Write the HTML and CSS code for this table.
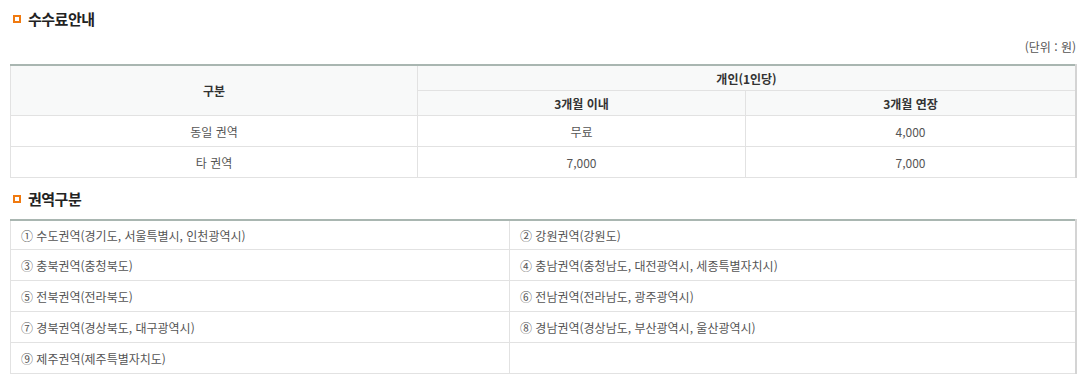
FILE: index.html
```html
<!DOCTYPE html>
<html lang="ko">
<head>
<meta charset="utf-8">
<link rel="stylesheet" href="styles.css">
</head>
<body>
<div class="page">
  <h3 class="title"><span class="bullet"></span>수수료안내</h3>
  <p class="unit">(단위 : 원)</p>
  <table class="tbl fee">
    <colgroup><col class="c1"><col class="c2"><col class="c3"></colgroup>
    <thead>
      <tr class="h1"><th rowspan="2">구분</th><th colspan="2">개인(1인당)</th></tr>
      <tr class="h2"><th>3개월 이내</th><th>3개월 연장</th></tr>
    </thead>
    <tbody>
      <tr class="r1"><td>동일 권역</td><td>무료</td><td>4,000</td></tr>
      <tr class="r2"><td>타 권역</td><td>7,000</td><td>7,000</td></tr>
    </tbody>
  </table>
  <h3 class="title title2"><span class="bullet"></span>권역구분</h3>
  <table class="tbl area">
    <colgroup><col class="a1"><col class="a2"></colgroup>
    <tbody>
      <tr class="first"><td>① 수도권역(경기도, 서울특별시, 인천광역시)</td><td>② 강원권역(강원도)</td></tr>
      <tr><td>③ 충북권역(충청북도)</td><td>④ 충남권역(충청남도, 대전광역시, 세종특별자치시)</td></tr>
      <tr><td>⑤ 전북권역(전라북도)</td><td>⑥ 전남권역(전라남도, 광주광역시)</td></tr>
      <tr><td>⑦ 경북권역(경상북도, 대구광역시)</td><td>⑧ 경남권역(경상남도, 부산광역시, 울산광역시)</td></tr>
      <tr><td>⑨ 제주권역(제주특별자치도)</td><td></td></tr>
    </tbody>
  </table>
</div>
</body>
</html>
```
FILE: styles.css
```css
html, body {
  margin: 0;
  padding: 0;
  background: #fff;
}
body {
  font-family: "Noto Sans CJK KR", "Noto Sans", sans-serif;
  font-size: 12px;
  color: #555;
}
.page {
  padding: 8px 0 0 10px;
  width: 1067px;
}
.title {
  display: flex;
  align-items: center;
  gap: 7px;
  margin: 0;
  height: 20px;
  font-size: 15px;
  font-weight: bold;
  color: #222;
  letter-spacing: -0.5px;
}
.bullet {
  width: 8px;
  height: 8px;
  box-sizing: border-box;
  border: 2px solid #f07a10;
  margin-left: 3px;
  margin-top: 1px;
}
.unit {
  margin: 10px 1px 0 0;
  height: 26px;
  line-height: 17px;
  text-align: right;
  color: #555;
}
.tbl {
  width: 1067px;
  border-collapse: collapse;
  table-layout: fixed;
  border-top: 2px solid #a9b6b1;
  border-right: 2px solid #d4d4d4;
}
.tbl th, .tbl td {
  border: 1px solid #e2e2e2;
  padding: 0;
  font-weight: normal;
}
.fee .c1 { width: 407px; }
.fee .c2 { width: 328px; }
.fee th {
  background: #f8f9f9;
  font-weight: bold;
  color: #333;
  text-align: center;
}
.fee .h1 th { height: 24px; }
.fee .h2 th { height: 24px; }
.fee td {
  text-align: center;
  height: 30px;
}
.title2 {
  margin-top: 10px;
  margin-bottom: 11px;
}
.area .a1 { width: 499px; }
.area td {
  height: 30px;
  padding-left: 10px;
  text-align: left;
}
.area .first td { height: 28px; }
```
